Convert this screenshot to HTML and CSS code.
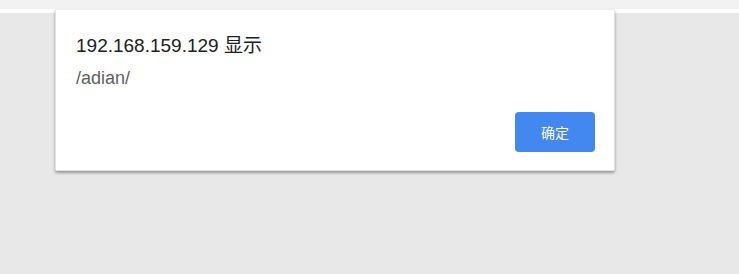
FILE: index.html
```html
<!DOCTYPE html>
<html>
<head>
<meta charset="utf-8">
<link rel="stylesheet" href="styles.css">
</head>
<body>
<div class="topbar"></div>
<div class="strip"></div>
<div class="page">
  <div class="dialog">
    <div class="title">192.168.159.129 显示</div>
    <div class="message">/adian/</div>
    <div class="actions">
      <button class="ok">确定</button>
    </div>
  </div>
</div>
</body>
</html>
```
FILE: styles.css
```css
html, body {
  margin: 0;
  padding: 0;
}
body {
  width: 739px;
  height: 274px;
  background: #e8e8e8;
  position: relative;
  overflow: hidden;
  font-family: "Liberation Sans", "Noto Sans CJK SC", sans-serif;
}
.topbar {
  height: 9px;
  background: #f2f2f2;
}
.strip {
  height: 4px;
  background: #fdfdfd;
}
.dialog {
  position: absolute;
  left: 55px;
  top: 9px;
  width: 560px;
  height: 162px;
  box-sizing: border-box;
  background: #fff;
  border: 1px solid #e2e2e2;
  border-top-color: #ececec;
  box-shadow: 0 2px 3px rgba(0, 0, 0, 0.35);
  border-radius: 2px;
  padding: 24px 19px 0 20px;
}
.title {
  font-size: 19px;
  color: #202020;
  line-height: 24px;
}
.message {
  margin-top: 10px;
  font-size: 18px;
  color: #606060;
  line-height: 20px;
}
.actions {
  display: flex;
  justify-content: flex-end;
  margin-top: 24px;
}
.ok {
  width: 80px;
  height: 40px;
  background: #4288f0;
  color: #fff;
  border: none;
  border-radius: 4px;
  font-family: "Noto Sans CJK SC", sans-serif;
  font-size: 14px;
  padding: 0;
}
```
